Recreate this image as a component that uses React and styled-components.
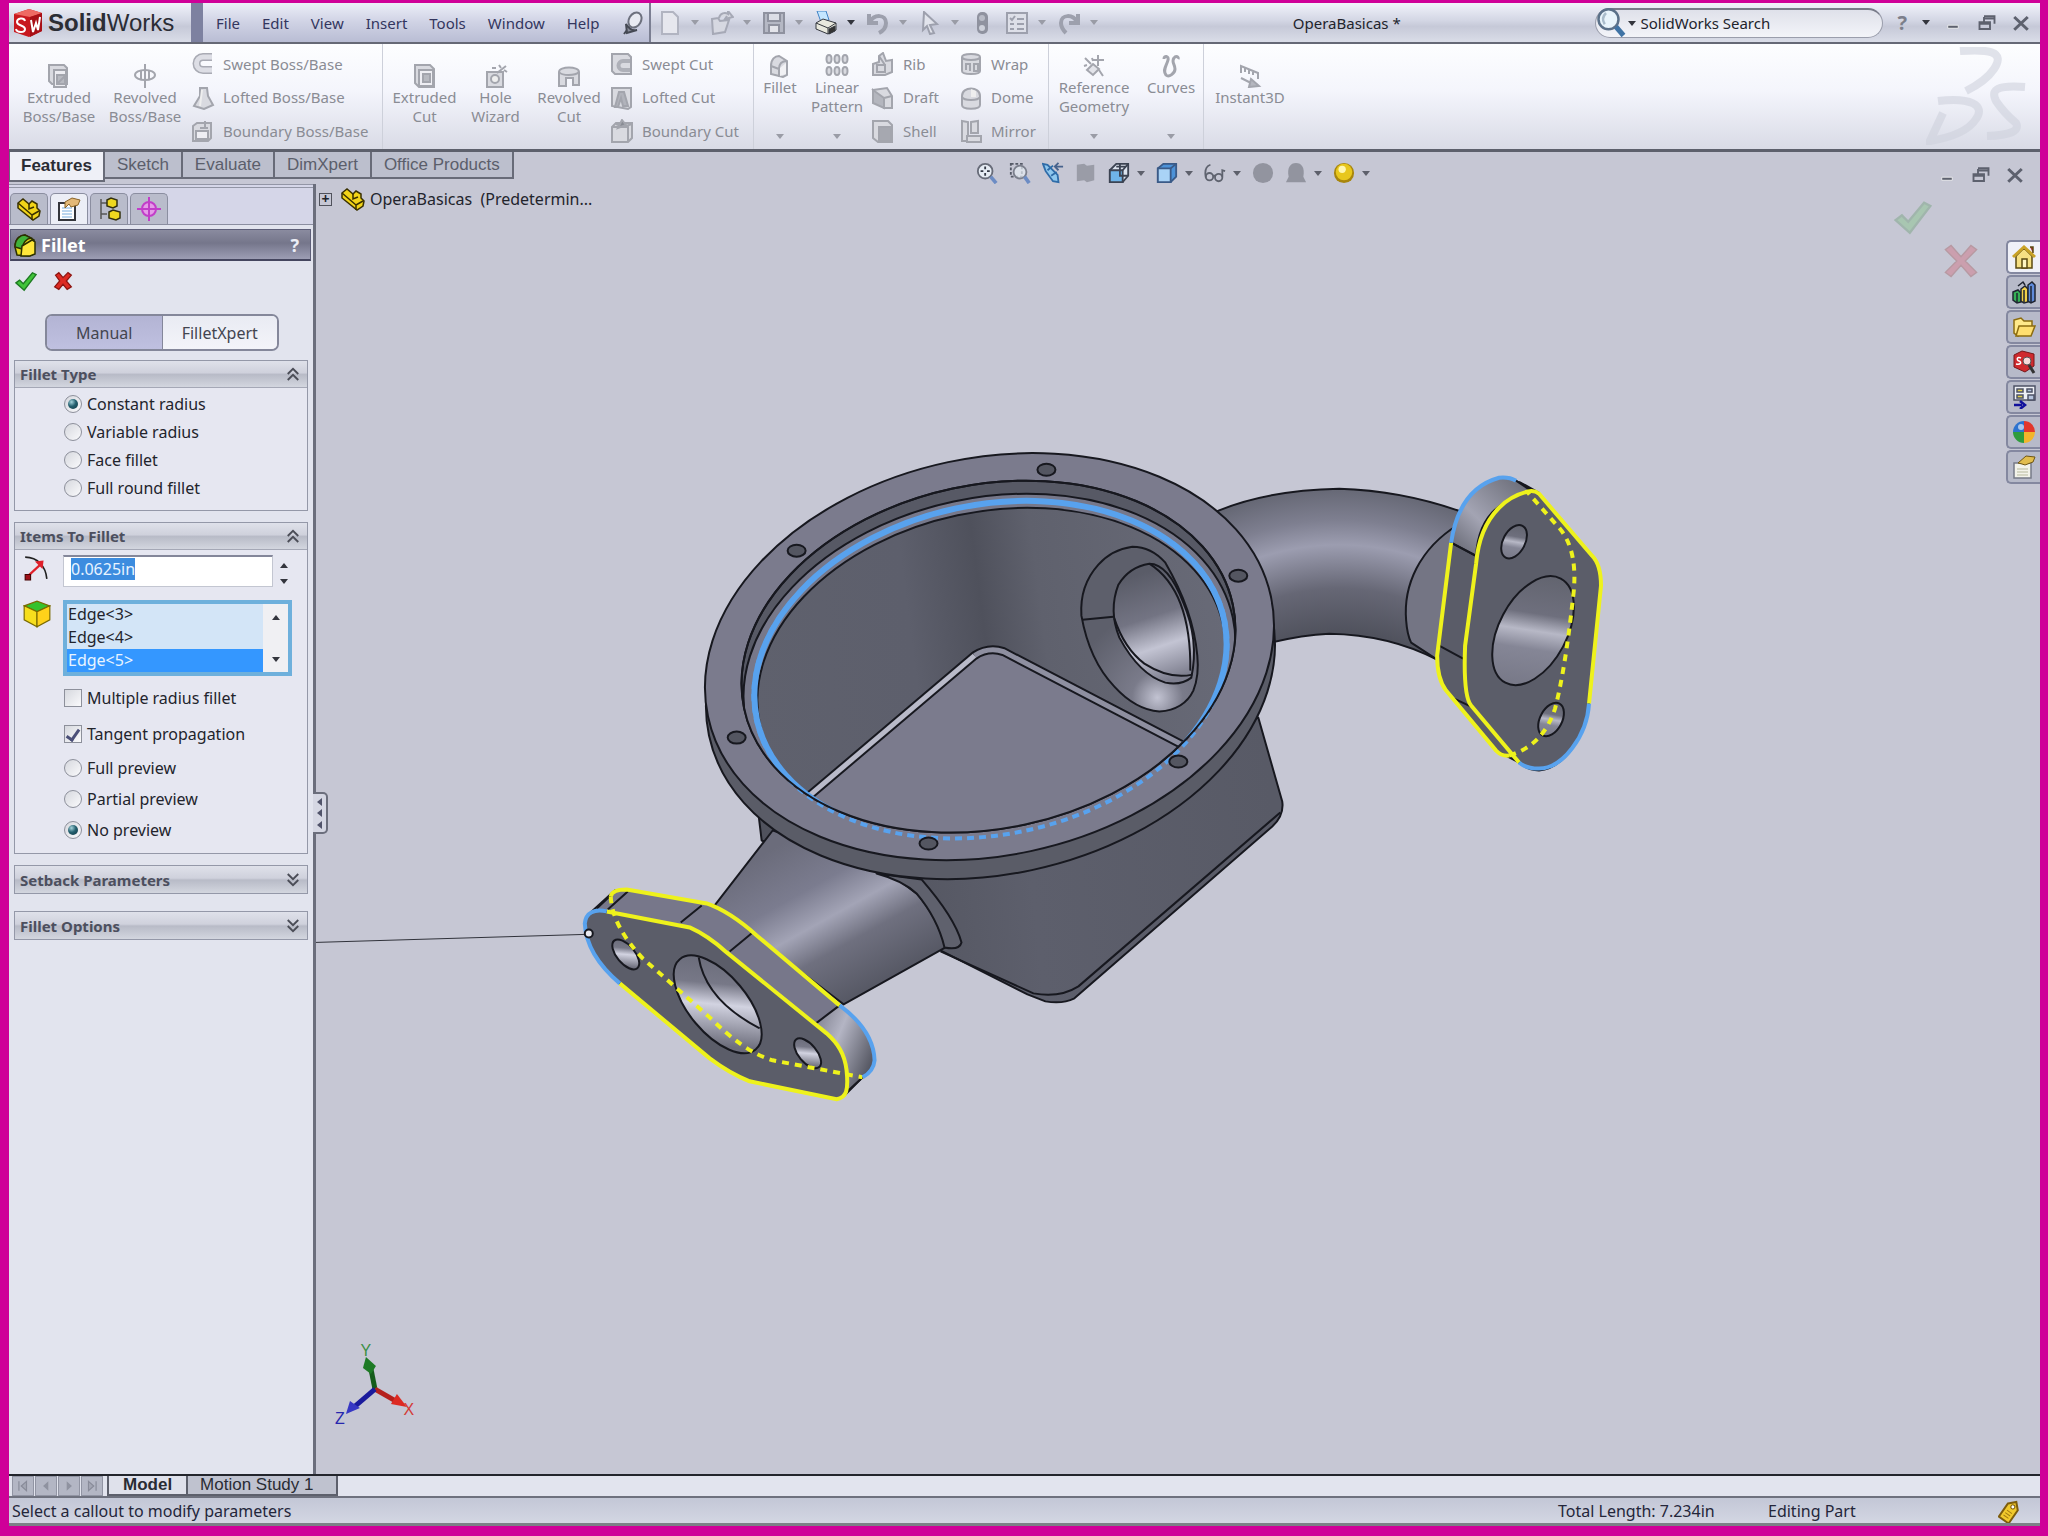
import styled, { createGlobalStyle } from "styled-components";
import { useEffect, useRef } from "react";

const uiFont = `"Noto Sans", "Open Sans", sans-serif`;
const tabFont = `"Liberation Sans", Arial, sans-serif`;

/* ---------- icons, all on a 24 x 24 grid ---------- */

const gray = { fill: "#d9dae0", stroke: "#a3a5ad", strokeWidth: 2 };
const line = { fill: "none", stroke: "#a3a5ad", strokeWidth: 2 };

const icons = {
    extrude: <g {...gray}><path d="M2 1h15l3 3v16H5l-3-3z" /><path d="M7 6h12v17H7z" fill="#ececf1" /><path d="M10 11h8v9h-8z" fill="#b7b9c0" /><path d="M10 20l9-9" /></g>,
    revolve: <g {...line}><path d="M12 0v24" /><ellipse cx="12" cy="11" rx="10" ry="5" /><path d="M8 7v9M16 7v9" /></g>,
    sweep: <g fill="none"><path d="M21 5h-9a6 6 0 0 0 0 13h9" stroke="#a9abb4" strokeWidth="8" /><path d="M21 5h-9a6 6 0 0 0 0 13h9" stroke="#dddee5" strokeWidth="5" /></g>,
    loft: <g {...gray}><path d="M9 2h7l1 8 5 9-9 4-10-3 6-10z" /><path d="M11 4l-2 16" stroke="#eee" /></g>,
    boundary: <g {...gray}><path d="M2 7l4-3h14v15l-3 3H2z" /><path d="M5 12h12v8H5z" fill="#eeeef3" /><path d="M14 2v8M9 9h8" /></g>,
    cut: <g {...gray}><path d="M2 1h15l4 4v18H6l-4-4z" /><path d="M6 6h14v16H6z" fill="#eeeef3" /><path d="M10 10h7v8h-7z" fill="#b7b9c0" /></g>,
    wizard: <g {...gray}><path d="M3 8h16v15H3z" /><circle cx="11" cy="15" r="4" fill="#eee" /><path d="M13 9l9-7M15 1l2 3M20 6l3 2M8 4h4" /></g>,
    revcut: <g {...gray}><path d="M2 8c0-6 20-6 20 0v13h-6v-7H9v8H2z" /><path d="M2 8c3 4 16 4 20 0" fill="none" /></g>,
    sweepcut: <g {...gray}><path d="M2 2h16l3 3v17H5l-3-3z" /><path d="M20 9h-7a4 4 0 0 0 0 9h7" fill="none" strokeWidth="4" stroke="#aeb0b8" /></g>,
    loftcut: <g {...gray}><path d="M2 2h19v19l-3 2-16-3z" /><path d="M9 6h5l4 14h-5l-2-8-3 9H5z" fill="#b1b3bb" /></g>,
    boundcut: <g {...gray}><path d="M2 8l4-4h16v15l-4 4H2z" /><path d="M2 8h16v15M6 5l7 3 9-3" /><path d="M12 1l4 5-8 3z" fill="#888b93" /></g>,
    fillet: <g {...gray}><path d="M3 12c0-7 4-10 8-10l8 5v14l-4 2-12-3z" /><path d="M3 12l8 3v8M11 15c0-5 3-8 8-8" fill="none" /><path d="M12 14l6-5v11l-6 2z" fill="#f1f1f4" stroke="none" /></g>,
    pattern: <g {...gray}>{[4, 12, 20].map((x) => [5, 17].map((y) => <ellipse key={x + y * 30} cx={x} cy={y} rx="2.5" ry="4" />))}</g>,
    rib: <g {...gray}><path d="M2 12l6-2V4l4-3 3 8 6-1v12l-7 3H2z" /><path d="M6 13h8v7H6zM8 4l6 9" /></g>,
    draft: <g {...gray}><path d="M2 4l14-2 5 8v12h-8z" /><path d="M2 4l11 8v10L2 17zM13 12l8-2" fill="#b4b6be" /></g>,
    shell: <g {...gray}><path d="M2 2h15l4 4v17H7l-5-4z" /><path d="M8 8h12v14H8z" fill="#a6a8b0" /></g>,
    wrap: <g {...gray}><path d="M3 5v14c0 4 18 4 18 0V5" /><ellipse cx="12" cy="5" rx="9" ry="3" /><path d="M7 18v-6h4v7M15 12h4v7h-4z" /></g>,
    dome: <g {...gray}><path d="M3 10C3 0 21 0 21 10v9c0 5-18 5-18 0z" /><path d="M3 11c2 4 16 4 18 0" fill="none" /><path d="M12 3l5 2v6h-5z" fill="#eee" stroke="none" /></g>,
    mirror: <g {...gray}><path d="M3 2l6 1v19H3zM12 3l7-1v12h-7z" /><path d="M8 17h14v6H8z" /></g>,
    refgeo: <g {...line}><path d="M3 4l6 6M16 1v11M11 6h11M17 16l4 6" /><path d="M11 10l6 5-6 6-6-5z" fill="#e3e4ea" /><path d="M2 12l3-1M10 4l1 3" /></g>,
    curves: <path d="M5 5c0-4 5-3 4 1-1 5-6 10-2 15 3 3 9-2 9-6 0-5-4-7-1-11 2-3 5-1 4 1" fill="none" stroke="#a3a5ad" strokeWidth="3" />,
    instant: <g {...line}><path d="M3 9V2l17 7v6M7 4v4M11 6v4M15 8v3M3 14l12 6" /><path d="M13 15l8 7-10 1z" fill="#b5b7bf" /></g>,

    newdoc: <path d="M4 1h11l5 5v17H4z" fill="#e6e7ee" stroke="#b1b4c1" strokeWidth="2" />,
    open: <path d="M2 8l6-1 2 3 9-1-4 12-12 2zM9 7c1-5 6-6 9-4V0l5 6-8 2 2-3" fill="#d6d8e1" stroke="#a6a9b6" strokeWidth="2" />,
    save: <g fill="#b5b8c4" stroke="#8f929f" strokeWidth="2"><path d="M2 2h20v20H2z" /><path d="M6 2h12v8H6z" fill="#dcdee6" /><path d="M7 14h10v8H7z" fill="#e3e4ea" /></g>,
    print: <g stroke="#35383f" strokeWidth="1"><path d="M3 0h9l3 9-8 2z" fill="#c4e6ff" stroke="#3f81c4" /><path d="M2 12l7-4 13 4v7l-8 4-12-5z" fill="#e8e8dd" /><path d="M2 12l12 5 8-5M14 17v6" fill="none" /><path d="M15 18l6-3v5l-6 3z" fill="#333" /></g>,
    undo: <path d="M3 3v9h9M4 11c4-8 16-8 16 1 0 5-3 8-7 10" fill="none" stroke="#9da0ad" strokeWidth="4" />,
    redo: <path d="M21 3v9h-9M20 11C16 3 4 3 4 12c0 5 3 8 5 10" fill="none" stroke="#9da0ad" strokeWidth="4" />,
    cursor: <path d="M6 1l13 12-7 1 4 8-4 1-3-8-4 4z" fill="#e2e4ec" stroke="#9da0ad" strokeWidth="2" />,
    rebuild: <g><rect x="7" y="1" width="11" height="22" rx="5" fill="#8f929f" /><circle cx="12" cy="7" r="3" fill="#b8bbc6" /><circle cx="12" cy="17" r="3" fill="#cdd0da" /></g>,
    options: <g stroke="#9da0ad" strokeWidth="2" fill="#dddfe8"><path d="M2 2h20v20H2z" /><path d="M5 7l2 2 3-4M12 8h7M5 13h4M12 13h7M5 18h4M12 18h7" fill="none" /></g>,
    pin: <g stroke="#454954" strokeWidth="2" fill="#e8eaf2"><path d="M3 23l6-8" /><path d="M5 13c3 5 7 7 11 6l-10 3z" fill="#8a8e9c" /><ellipse cx="14" cy="9" rx="6" ry="8" transform="rotate(30 14 9)" stroke="#6d717e" /></g>,
    search: <g fill="none"><ellipse cx="10" cy="9" rx="8" ry="8" stroke="#5b7189" strokeWidth="2" fill="#e8f4fb" /><path d="M16 15l6 7" stroke="#3f73a5" strokeWidth="4" /><path d="M8 4c-3 3-3 6-1 9" stroke="#a9bccb" strokeWidth="2" /></g>,

    zoomfit: <g fill="none"><circle cx="10" cy="10" r="8" fill="#e6ecf4" stroke="#676b78" strokeWidth="2" /><path d="M10 5v3M10 12v3M5 10h3M12 10h3" stroke="#333845" strokeWidth="2" /><path d="M16 16l6 7" stroke="#6c8cc4" strokeWidth="4" /></g>,
    zoomarea: <g fill="none"><path d="M2 2h12v14H2z" stroke="#555a67" strokeDasharray="3 2" strokeWidth="2" /><circle cx="12" cy="11" r="7" fill="#e6ecf4" fillOpacity=".7" stroke="#7b7f8c" strokeWidth="2" /><path d="M17 16l5 7" stroke="#6c8cc4" strokeWidth="4" /></g>,
    prevview: <g><path d="M1 2l5 1 11 11 1 8-6-1L4 10z" fill="#8fc8ee" stroke="#2f6ca8" strokeWidth="2" /><path d="M6 9l6-5M10 15l6-4" stroke="#2f6ca8" strokeWidth="2" /><path d="M14 5h9M18 1l-4 4 4 4" stroke="#47628c" strokeWidth="2" fill="none" /></g>,
    section: <path d="M2 3l8-1 3 2 8-1v17l-8 2-3-2-8 1z" fill="#9a9ca7" />,
    orient: <g stroke="#3c4352" strokeWidth="2" fill="#dce3ee"><path d="M2 9l7-7h13v13l-6 7H2z" /><path d="M2 9h14v13H2z" fill="#6fb4e8" /><path d="M16 9l6-7M13 2v13h9M9 5h11" fill="none" /></g>,
    display: <g stroke="#3a5a87" strokeWidth="2"><path d="M2 7l6-5h14v14l-6 6H2z" fill="#4c92d8" /><path d="M2 7h14v15H2z" fill="#a9d3f6" /><path d="M16 7l6-5" /></g>,
    glasses: <g fill="none" stroke="#5f636f" strokeWidth="2"><path d="M7 3C1 5 1 12 2 17" /><ellipse cx="6" cy="16" rx="4" ry="4" /><ellipse cx="16" cy="17" rx="4" ry="4" /><path d="M10 15h3M20 16V9l3 1" /></g>,
    sphere: <circle cx="12" cy="12" r="11" fill="#92949f" />,
    scene: <path d="M1 22l3-6C2 6 6 1 12 1s10 5 8 15l3 6z" fill="#92949f" />,
    gold: <g><circle cx="12" cy="12" r="11" fill="#a8860c" /><circle cx="12" cy="11" r="9" fill="#e8c71d" /><circle cx="10" cy="8" r="4" fill="#fff7b0" /></g>,

    part: <g stroke="#3a3100" strokeWidth="1.5"><path d="M1 6l5-4 6 5 3-3 5 3v4l3 3-1 5-6 4L1 11z" fill="#f2d418" /><path d="M1 6l14 12v5M15 18l7-4M12 7v5l5-2" fill="none" /></g>,
    props: <g><path d="M2 6h16v17H2z" fill="#fff" stroke="#34353b" strokeWidth="2" /><path d="M5 11h10M5 14h10M5 17h10M5 20h10" stroke="#79aede" /><path d="M8 5l7-4 8 2-2 5-7 2-2-3-4 4z" fill="#e3b877" stroke="#8a6427" /></g>,
    config: <g stroke="#33300f" strokeWidth="1.5"><path d="M4 2v20M4 6h6M4 17h6" stroke="#555" fill="none" /><path d="M10 3l4-2 6 2v6l-4 2-6-2zM12 15l4-2 7 2v6l-4 2-7-2z" fill="#efd81f" /></g>,
    dimx: <g stroke="#c23ec9" strokeWidth="2" fill="none"><circle cx="12" cy="12" r="7" fill="#e59be8" /><path d="M12 0v24M0 12h24" /></g>,
    filletColor: <g stroke="#2b3000" strokeWidth="1.5"><path d="M2 14C2 5 8 2 12 2l9 5v14l-5 2-12-1z" fill="#e5d91c" /><path d="M2 14C2 5 8 2 12 2l6 3c-6 1-8 5-9 11z" fill="#3fb23a" /><path d="M9 13l10-6 3 2v12l-5 2H8z" fill="#ffe73b" /></g>,
    ok: <path d="M1 14l4-3 4 4L19 3l4 2L10 22z" fill="#41c43a" stroke="#1d7a22" strokeWidth="1.5" />,
    cancel: <path d="M3 5l4-3 5 6 6-6 4 3-6 7 6 7-5 3-5-6-5 6-5-3 6-7z" fill="#dd2a22" stroke="#8d1410" strokeWidth="1.5" />,
    ghostCancel: <path d="M1 4l4-3 7 8 7-8 4 3-8 8 8 8-4 3-7-8-7 8-4-3 8-8z" fill="#dd2a42" stroke="#8d1410" strokeWidth="1" />,
    radius: <g fill="none"><path d="M2 2c12 0 19 9 20 20" stroke="#222" strokeWidth="1.5" /><path d="M4 20L17 8" stroke="#e0202a" strokeWidth="2" /><path d="M19 5l-1 8-7-7z" fill="#e0202a" /><path d="M2 18h5v5H2z" fill="#a01018" stroke="#400" /></g>,
    cube: <g stroke="#7a6a00" strokeWidth="1"><path d="M1 5l11-4 11 4-11 5z" fill="#35c22c" /><path d="M1 5l11 5v13L1 17z" fill="#f6de1d" /><path d="M23 5l-11 5v13l11-6z" fill="#ffd21a" /></g>,
    up: <path d="M5 12l7-7 7 7M5 20l7-7 7 7" fill="none" stroke="#4b4d57" strokeWidth="2.5" />,
    down: <path d="M5 4l7 7 7-7M5 12l7 7 7-7" fill="none" stroke="#4b4d57" strokeWidth="2.5" />,

    home: <g stroke="#5b4a12" strokeWidth="1.5"><path d="M4 11l8-8 8 8v12H4z" fill="#f7e083" /><path d="M1 12L12 2l11 10" fill="none" strokeWidth="3" stroke="#c9a227" /><path d="M10 14h5v9h-5z" fill="#fff6c4" /><path d="M18 2h3v6" fill="#a33" /></g>,
    library: <g stroke="#1f2430" strokeWidth="1.5"><path d="M1 12l5-2 3 3v9l-4 1-4-3z" fill="#35b055" /><path d="M9 9l4-3 3 3v13l-4 1-3-2z" fill="#f0cf49" /><path d="M16 5l4-3 3 3v16l-4 2-3-2z" fill="#5f8ad8" /><path d="M5 13v10M12 10v12M19 6v16M6 6l5-4 2 3" fill="none" /></g>,
    folder: <g stroke="#8c6c10" strokeWidth="1.5"><path d="M2 5l7-2 3 3h8v5L6 21 2 18z" fill="#ffe98a" /><path d="M7 11h16l-4 10H4z" fill="#ffdf70" /></g>,
    swsearch: <g><path d="M2 5l8-4 12 3v12l-9 6L2 17z" fill="#cf2a2e" stroke="#77181a" /><path d="M9 8c-4-2-5 2-2 3s2 4-3 3" stroke="#fff" strokeWidth="1.5" fill="none" /><circle cx="15" cy="11" r="4" fill="#f6dada" stroke="#555" /><path d="M17 15l5 8" stroke="#333" strokeWidth="3" /></g>,
    palette: <g stroke="#4d5266" strokeWidth="1.5"><path d="M2 1h21v14H2z" fill="#eef0f6" /><path d="M5 4h6v3H5zM5 10h6v3H5z" fill="#e3d24a" /><path d="M15 4h5v3h-5zM16 10h6v5h-6z" fill="#b6c4dd" /><path d="M2 20h8M8 16l5 4-5 4" stroke="#10109c" strokeWidth="2.5" fill="none" /></g>,
    ball: <g><path d="M12 12V1a11 11 0 0 1 11 11z" fill="#e2372c" /><path d="M12 12h11a11 11 0 0 1-11 11z" fill="#f2b52c" /><path d="M12 12v11A11 11 0 0 1 1 12z" fill="#2f9c3d" /><path d="M12 12H1A11 11 0 0 1 12 1z" fill="#2d73cf" /><circle cx="9" cy="7" r="3" fill="#fff" fillOpacity=".6" /></g>,
    custom: <g><path d="M2 8h17v15H2z" fill="#f3f3ea" stroke="#777b88" strokeWidth="1.5" /><path d="M5 14h11M5 17h11M5 20h11" stroke="#b7b99d" /><path d="M6 8l8-7 9 1-2 5-8 3-3-1z" fill="#e2bd4e" stroke="#6f5613" /></g>,
    tag: <g transform="rotate(35 12 12)"><path d="M6 7l6-6 6 6v16H6z" fill="#f1c92c" stroke="#7e5d0c" strokeWidth="2" /><circle cx="12" cy="7" r="2" fill="#fff" stroke="#7e5d0c" /><path d="M9 13h6M9 16h6M9 19h6" stroke="#a47c12" /></g>,
    min: <path d="M5 15h14v4H5z" fill="#5d616e" stroke="#fff" strokeWidth="1" />,
    restore: <path d="M8 3h14v10M8 4v6M8 6h14M2 11h14v9H2zM2 13h14" fill="none" stroke="#5d616e" strokeWidth="2.5" />,
    close: <path d="M3 4l18 17M21 4L3 21" fill="none" stroke="#5d616e" strokeWidth="4" />,
    first: <path d="M5 4v16M18 4l-9 8 9 8z" stroke="#888b99" strokeWidth="2" fill="#a3a6b3" />,
    prev: <path d="M16 4l-9 8 9 8z" fill="#8f92a0" />,
    next: <path d="M8 4l9 8-9 8z" fill="#8f92a0" />,
    last: <path d="M19 4v16M6 4l9 8-9 8z" stroke="#888b99" strokeWidth="2" fill="#a3a6b3" />,
};

const Svg = styled.svg`
    width: ${(p) => p.$size || 24}px;
    height: ${(p) => p.$size || 24}px;
    flex: none;
    display: block;
    opacity: ${(p) => p.$opacity || 1};
`;

const Icon = ({ name, size, opacity }) => (
    <Svg viewBox="0 0 24 24" $size={size} $opacity={opacity} aria-hidden="true">{icons[name]}</Svg>
);

/* ---------- data ---------- */

const menus = ["File", "Edit", "View", "Insert", "Tools", "Window", "Help"];

const quickTools = [
    { icon: "newdoc", label: "New", drop: true },
    { icon: "open", label: "Open", drop: true },
    { icon: "save", label: "Save", drop: true },
    { icon: "print", label: "Print", drop: true, active: true },
    { icon: "undo", label: "Undo", drop: true },
    { icon: "cursor", label: "Select", drop: true },
    { icon: "rebuild", label: "Rebuild" },
    { icon: "options", label: "Options", drop: true },
    { icon: "redo", label: "Redo", drop: true },
];

const viewTools = [
    { icon: "zoomfit", label: "Zoom to fit" },
    { icon: "zoomarea", label: "Zoom to area" },
    { icon: "prevview", label: "Previous view" },
    { icon: "section", label: "Section view" },
    { icon: "orient", label: "View orientation", drop: true },
    { icon: "display", label: "Display style", drop: true },
    { icon: "glasses", label: "Hide or show items", drop: true },
    { icon: "sphere", label: "Edit appearance" },
    { icon: "scene", label: "Apply scene", drop: true },
    { icon: "gold", label: "View settings", drop: true },
];

const taskTabs = ["home", "library", "folder", "swsearch", "palette", "ball", "custom"];
const tabs = ["Features", "Sketch", "Evaluate", "DimXpert", "Office Products"];

/* ---------- pieces ---------- */

const Tool = ({ icon, label, drop, active, size }) => (
    <ToolButton aria-label={label}>
        <Icon name={icon} size={size} />
        {drop && <Caret $dark={active} />}
    </ToolButton>
);

const Big = ({ icon, lines, width, drop, top }) => (
    <BigButton $width={width} $top={top}>
        <Icon name={icon} />
        <BigLabel>{lines.map((l) => <span key={l}>{l}</span>)}</BigLabel>
        {drop && <Caret />}
    </BigButton>
);

const Column = ({ items, width }) => (
    <SmallColumn $width={width}>
        {items.map(([icon, text]) => (
            <SmallButton key={text}><Icon name={icon} />{text}</SmallButton>
        ))}
    </SmallColumn>
);

const WindowButtons = () => (
    <WinButtons>
        <ToolButton aria-label="Minimize"><Icon name="min" size={18} /></ToolButton>
        <ToolButton aria-label="Restore"><Icon name="restore" size={18} /></ToolButton>
        <ToolButton aria-label="Close"><Icon name="close" size={18} /></ToolButton>
    </WinButtons>
);

const Group = ({ title, children }) => (
    <GroupBox $open={!!children}>
        <GroupHeader aria-expanded={!!children} $open={!!children}>
            {title}
            <Icon name={children ? "up" : "down"} size={18} />
        </GroupHeader>
        {children}
    </GroupBox>
);

const Choice = ({ type = "radio", name, label, checked, height }) => (
    <ChoiceRow $height={height}>
        <ChoiceInput type={type} name={name} defaultChecked={checked} />
        {label}
    </ChoiceRow>
);

const holes = [[1047, 469], [797, 550], [737, 737], [929, 843], [1179, 761], [1239, 575]];

const leftFront = "M607 911C595 908 586 912 585 923C586 945 600 966 620 983L710 1058Q730 1073 750 1081L837 1099C847 1097 849 1090 847 1070C845 1053 838 1043 827 1033L727 952Q708 935 690 927Z";
const rightFront = "M1528 491Q1535 489 1540 493L1593 555Q1602 564 1602 585L1590 703C1588 735 1564 768 1540 770Q1527 769 1520 762L1472 705Q1464 695 1466 645L1477 563Q1480 527 1500 507Q1512 495 1528 491Z";

const Model = () => (
    <Scene viewBox="316 183 1724 1291" preserveAspectRatio="xMinYMin meet" role="img" aria-label="Pump housing part">
        <defs>
            <linearGradient id="pipeL" gradientUnits="userSpaceOnUse" x1="770" y1="850" x2="855" y2="1003">
                <stop offset="0" stopColor="#6b6c7b" /><stop offset=".3" stopColor="#7b7c8f" /><stop offset=".5" stopColor="#a3a4b6" />
                <stop offset=".68" stopColor="#6f707f" /><stop offset="1" stopColor="#545662" />
            </linearGradient>
            <radialGradient id="pipeR" gradientUnits="userSpaceOnUse" cx="1340" cy="800" r="312">
                <stop offset=".54" stopColor="#50525d" /><stop offset=".68" stopColor="#666775" /><stop offset=".82" stopColor="#9c9db0" />
                <stop offset=".9" stopColor="#7e7f90" /><stop offset="1" stopColor="#666875" />
            </radialGradient>
            <linearGradient id="wall" gradientUnits="userSpaceOnUse" x1="750" y1="600" x2="1240" y2="640">
                <stop offset="0" stopColor="#5f616d" /><stop offset=".35" stopColor="#5d5f6c" /><stop offset=".5" stopColor="#4f515c" />
                <stop offset=".62" stopColor="#5f616d" /><stop offset="1" stopColor="#686a77" />
            </linearGradient>
            <linearGradient id="body" gradientUnits="userSpaceOnUse" x1="900" y1="900" x2="1280" y2="860">
                <stop offset="0" stopColor="#545661" /><stop offset=".35" stopColor="#5d5f6c" /><stop offset="1" stopColor="#585a66" />
            </linearGradient>
            <linearGradient id="bore" x1="0" y1="0" x2="1" y2="0.5">
                <stop offset="0" stopColor="#646674" /><stop offset=".4" stopColor="#777887" /><stop offset=".6" stopColor="#d2d3e1" /><stop offset="1" stopColor="#6c6d7b" />
            </linearGradient>
            <linearGradient id="boreR" x1="1" y1="0.4" x2="0" y2="0.6">
                <stop offset="0" stopColor="#62646f" /><stop offset=".35" stopColor="#6e6f7d" /><stop offset=".5" stopColor="#b7b8c6" /><stop offset=".66" stopColor="#858696" /><stop offset="1" stopColor="#777887" />
            </linearGradient>
            <radialGradient id="port" gradientUnits="userSpaceOnUse" cx="1158" cy="697" r="85">
                <stop offset="0" stopColor="#c2c3d2" /><stop offset=".3" stopColor="#7a7b8a" /><stop offset="1" stopColor="#5d5f6b" />
            </radialGradient>
            <linearGradient id="portIn" gradientUnits="userSpaceOnUse" x1="1135" y1="575" x2="1170" y2="680">
                <stop offset="0" stopColor="#5a5c68" /><stop offset=".4" stopColor="#737483" /><stop offset=".68" stopColor="#c3c4d3" /><stop offset="1" stopColor="#7c7d8d" />
            </linearGradient>
            <linearGradient id="lug" x1="0" y1="0" x2="1" y2="0.6">
                <stop offset="0" stopColor="#777887" /><stop offset=".45" stopColor="#b4b5c4" /><stop offset="1" stopColor="#555762" />
            </linearGradient>
            <linearGradient id="lugR" x1="0" y1="1" x2="1" y2="0">
                <stop offset="0" stopColor="#5f616c" /><stop offset=".4" stopColor="#a3a4b3" /><stop offset="1" stopColor="#62646f" />
            </linearGradient>
            <clipPath id="opening"><ellipse cx="989" cy="656" rx="250" ry="172" transform="rotate(-12 989 656)" /></clipPath>
        </defs>

        <g stroke="#17181f" strokeWidth="2" strokeLinejoin="round">
            <path d="M1190 525Q1245 490 1340 488Q1405 490 1465 512L1438 659Q1390 634 1330 633Q1300 634 1260 645Z" fill="url(#pipeR)" />
            <path d="M1459 524C1420 548 1404 585 1407 620Q1408 634 1412 642L1438 659L1462 620Z" fill="#747584" />

            <path d="M759 800V815L762 840L790 850V800Z" fill="#50525d" />
            <path d="M860 860L1259 717L1283 801Q1285 815 1273 826L1075 998Q1063 1004 1046 1001L1028 994L925 942Z" fill="url(#body)" />
            <path d="M941 951L1034 993Q1060 998 1079 986L1281 812" fill="none" />
            <path d="M773 830L715 905L760 940L844 1004L946 947Q937 915 917 893L870 858Z" fill="url(#pipeL)" />
            <path d="M877 873Q903 880 917 893Q938 918 945 947Q960 950 962 942Q955 917 922 879Z" fill="#5f616d" />

            <ellipse cx="991" cy="675" rx="288" ry="199" transform="rotate(-12 991 675)" fill="#5a5c67" />
            <ellipse cx="990" cy="656" rx="288" ry="199" transform="rotate(-12 990 656)" fill="#7b7b8d" />
            <ellipse cx="989" cy="656" rx="250" ry="172" transform="rotate(-12 989 656)" fill="#575965" />
        </g>

        <g clipPath="url(#opening)" stroke="#17181f" strokeWidth="2">
            <ellipse cx="990" cy="669" rx="249" ry="172" transform="rotate(-12 990 669)" fill="#77788a" />
            <ellipse cx="992" cy="674" rx="237" ry="163" transform="rotate(-12 992 674)" fill="url(#wall)" />
            <path d="M800 800L975 654Q989 644 1004 650L1190 748L1180 850H850Z" fill="#7b7b8d" stroke="none" />
            <path d="M804 800L975 655Q989 646 1004 651L1190 748" fill="none" strokeWidth="9" />
            <path d="M975 655Q989 646 1004 651L1190 748" fill="none" stroke="#8e8fa0" strokeWidth="5" />
            <path d="M804 800L975 655" fill="none" stroke="#b9bac9" strokeWidth="5" />
            <path d="M1133 546Q1112 549 1099 564Q1080 585 1082 615Q1090 660 1115 686Q1136 709 1160 711Q1185 709 1194 690Q1200 675 1198 655Q1194 610 1166 562Q1152 546 1133 546Z" fill="url(#port)" />
            <path d="M1150 563Q1130 566 1119 584Q1109 610 1120 637Q1140 674 1166 682Q1182 685 1192 677Q1200 640 1184 602Q1169 563 1150 563Z" fill="url(#portIn)" />
            <path d="M1115 618Q1125 648 1145 663Q1170 679 1193 674M1083 619L1114 616M1150 563Q1192 590 1191 670" fill="none" />
        </g>
        <g fill="none" stroke="#58a2ee">
            <ellipse cx="991" cy="669" rx="240" ry="165" transform="rotate(-12 991 669)" strokeWidth="4" strokeDasharray="7 5" />
            <g clipPath="url(#opening)">
                <ellipse cx="991" cy="669" rx="239" ry="165" transform="rotate(-12 991 669)" strokeWidth="6" />
            </g>
        </g>
        <ellipse cx="989" cy="656" rx="250" ry="172" transform="rotate(-12 989 656)" fill="none" stroke="#17181f" strokeWidth="2" />
        <g fill="#545661" stroke="#17181f" strokeWidth="2">
            {holes.map(([x, y]) => <ellipse key={x} cx={x} cy={y} rx="9" ry="6" />)}
        </g>

        {/* left flange */}
        <g stroke="#17181f" strokeWidth="2">
            <path d="M593 910L615 890L627 889L707 903Q730 911 757 935L840 1005Q874 1030 875 1060Q874 1071 863 1077L845 1095L700 960Z" fill="#77778a" />
            <path d="M815 1024L840 1005Q874 1030 875 1060Q874 1071 863 1077L848 1091Q850 1050 815 1024Z" fill="url(#lug)" />
            <path d={leftFront} fill="#5b5d69" />
            <path d="M597 908L615 891M608 909L628 891M681 922L702 905M730 951L753 932" fill="none" />
            <ellipse cx="718" cy="1004" rx="59" ry="29" transform="rotate(50 718 1004)" fill="url(#bore)" />
            <path d="M699 957Q706 1000 760 1028" fill="none" />
            <ellipse cx="626" cy="954" rx="18" ry="9" transform="rotate(50 626 954)" fill="url(#bore)" />
            <ellipse cx="808" cy="1053" rx="18" ry="9" transform="rotate(50 808 1053)" fill="url(#bore)" />
        </g>
        <g fill="none" strokeWidth="4" stroke="#eef21c">
            <path d="M620 983L710 1058Q730 1073 750 1081L837 1099C847 1097 849 1090 847 1070C845 1053 838 1043 827 1033L727 952Q708 935 690 927L607 911" />
            <path d="M611 896Q612 889 627 889L707 903Q730 911 757 935L840 1005" />
            <path d="M611 896Q612 925 643 958L710 1017Q745 1052 773 1060L863 1077" strokeDasharray="7 6" />
            <path d="M607 911C595 908 586 912 585 923C586 945 600 966 620 983M840 1005Q874 1030 875 1060Q874 1071 863 1077" stroke="#58a2ee" />
        </g>

        {/* right flange */}
        <g stroke="#17181f" strokeWidth="2">
            <path d="M1452 542L1438 655Q1438 678 1447 690L1497 750L1520 762L1560 600L1540 493L1515 479Z" fill="#5a5c68" />
            <path d="M1452 542Q1460 488 1500 477Q1510 476 1517 480L1535 492Q1480 500 1477 555Z" fill="url(#lugR)" />
            <path d={rightFront} fill="#5b5d69" />
            <path d="M1452 542L1476 555M1440 645L1464 658M1455 698L1472 706M1520 481L1540 492" fill="none" />
            <ellipse cx="1534" cy="630" rx="59" ry="34" transform="rotate(-62 1534 630)" fill="url(#boreR)" />
            <ellipse cx="1515" cy="541" rx="18" ry="11" transform="rotate(-62 1515 541)" fill="url(#boreR)" />
            <ellipse cx="1552" cy="719" rx="18" ry="11" transform="rotate(-62 1552 719)" fill="url(#boreR)" />
        </g>
        <g fill="none" strokeWidth="4" stroke="#eef21c">
            <path d="M1520 762L1472 705Q1464 695 1466 645L1477 563Q1480 527 1500 507Q1512 495 1528 491Q1535 489 1540 493L1593 555Q1602 564 1602 585L1590 703" />
            <path d="M1452 542L1438 655Q1438 678 1447 690L1497 750Q1503 756 1510 755" />
            <path d="M1510 755Q1544 745 1556 708Q1566 670 1574 597Q1580 550 1560 527L1528 491" strokeDasharray="7 6" />
            <path d="M1452 542Q1460 488 1500 477Q1510 476 1517 480M1590 703C1588 735 1564 768 1540 768Q1527 768 1520 762" stroke="#58a2ee" />
        </g>

        <path d="M316 942L585 934" stroke="#30323a" strokeWidth="1" />
        <circle cx="589" cy="933" r="4" fill="#e9e9ef" stroke="#17181f" strokeWidth="2" />

        {/* triad */}
        <g strokeWidth="5">
            <path d="M375 1389L370 1364" stroke="#155c1b" /><path d="M366 1357L376 1366L371 1374L363 1368Z" fill="#1d7a25" />
            <path d="M375 1389L396 1401" stroke="#b5201c" /><path d="M407 1407L397 1394L391 1404Z" fill="#dd2a22" />
            <path d="M375 1389L354 1407" stroke="#1a1a9c" /><path d="M346 1414L350 1401L360 1408Z" fill="#3737c4" />
        </g>
        <g fontFamily="Liberation Sans, sans-serif" fontSize="16" textAnchor="middle">
            <text x="366" y="1356" fill="#3c8f45">Y</text>
            <text x="409" y="1415" fill="#d43a36">X</text>
            <text x="340" y="1424" fill="#2626ae">Z</text>
        </g>
    </Scene>
);

const App = () => {
    const radiusField = useRef(null);

    useEffect(() => {
        radiusField.current.focus();
        radiusField.current.select();
    }, []);

    return (
        <Frame>
            <GlobalStyle />
            <TitleBar>
                <Brand>
                    <Svg viewBox="0 0 30 30" $size={30} aria-hidden="true">
                        <path d="M1 6L16 1l13 4v18L16 29 1 24z" fill="#c8191f" />
                        <path d="M1 6L16 1l13 4-12 4z" fill="#ee6a63" />
                        <path d="M17 9l12-4v18l-12 6z" fill="#a80f16" />
                        <path d="M12 13c-1-4-8-3-8 1 0 4 8 3 8 7 0 4-8 4-9 0M18 12l2 12 3-9 2 7 2-13" fill="none" stroke="#fff" strokeWidth="2" />
                    </Svg>
                    <span><b>Solid</b>Works</span>
                </Brand>
                <MenuBar>
                    {menus.map((m) => <MenuButton key={m}>{m}</MenuButton>)}
                    <Icon name="pin" />
                </MenuBar>
                <QuickBar>
                    {quickTools.map((t) => <Tool key={t.icon} {...t} />)}
                </QuickBar>
                <DocTitle>OperaBasicas *</DocTitle>
                <SearchBox>
                    <Icon name="search" size={30} />
                    <Caret $dark />
                    <SearchInput aria-label="Search" defaultValue="SolidWorks Search" />
                </SearchBox>
                <HelpButton aria-label="Help">?<Caret $dark /></HelpButton>
                <WindowButtons />
            </TitleBar>

            <Ribbon>
                <RibbonGroup>
                    <Big icon="extrude" lines={["Extruded", "Boss/Base"]} width={86} />
                    <Big icon="revolve" lines={["Revolved", "Boss/Base"]} width={86} />
                    <Column width={194} items={[["sweep", "Swept Boss/Base"], ["loft", "Lofted Boss/Base"], ["boundary", "Boundary Boss/Base"]]} />
                </RibbonGroup>
                <RibbonGroup>
                    <Big icon="cut" lines={["Extruded", "Cut"]} width={71} />
                    <Big icon="wizard" lines={["Hole", "Wizard"]} width={71} />
                    <Big icon="revcut" lines={["Revolved", "Cut"]} width={76} />
                    <Column width={146} items={[["sweepcut", "Swept Cut"], ["loftcut", "Lofted Cut"], ["boundcut", "Boundary Cut"]]} />
                </RibbonGroup>
                <RibbonGroup $tight>
                    <Big icon="fillet" lines={["Fillet"]} width={52} drop top />
                    <Big icon="pattern" lines={["Linear", "Pattern"]} width={62} drop top />
                    <Column width={88} items={[["rib", "Rib"], ["draft", "Draft"], ["shell", "Shell"]]} />
                    <Column width={92} items={[["wrap", "Wrap"], ["dome", "Dome"], ["mirror", "Mirror"]]} />
                </RibbonGroup>
                <RibbonGroup $tight>
                    <Big icon="refgeo" lines={["Reference", "Geometry"]} width={90} drop top />
                    <Big icon="curves" lines={["Curves"]} width={64} drop top />
                </RibbonGroup>
                <RibbonGroup>
                    <Big icon="instant" lines={["Instant3D"]} width={80} />
                </RibbonGroup>
                <Watermark viewBox="0 0 106 98" aria-hidden="true">
                    <g fill="none" stroke="#cfd2dd" strokeWidth="8">
                        <path d="M34 4C62 2 80 4 68 22Q60 34 40 44M12 54C44 50 60 58 50 72Q40 88 4 94L17 66" />
                        <path d="M99 40C72 38 64 42 70 54Q78 66 90 76Q96 88 61 89" />
                    </g>
                </Watermark>
            </Ribbon>

            <TabRow>
                <Tabs role="tablist">
                    {tabs.map((t, i) => <Tab key={t} role="tab" aria-selected={i === 0} $active={i === 0}>{t}</Tab>)}
                </Tabs>
                <ViewBar>
                    {viewTools.map((t) => <Tool key={t.icon} {...t} size={22} />)}
                </ViewBar>
                <WindowButtons />
            </TabRow>

            <Main>
                <Panel>
                    <PanelTabs>
                        {["part", "props", "config", "dimx"].map((n) => (
                            <PanelTab key={n} aria-label={n} $active={n === "props"}><Icon name={n} /></PanelTab>
                        ))}
                    </PanelTabs>
                    <PanelTitle>
                        <Icon name="filletColor" />
                        <span>Fillet</span>
                        <PanelHelp aria-label="Help">?</PanelHelp>
                    </PanelTitle>
                    <Confirm>
                        <ToolButton aria-label="OK"><Icon name="ok" size={22} /></ToolButton>
                        <ToolButton aria-label="Cancel"><Icon name="cancel" size={20} /></ToolButton>
                    </Confirm>
                    <Segmented>
                        <Segment $active>Manual</Segment>
                        <Segment>FilletXpert</Segment>
                    </Segmented>

                    <Group title="Fillet Type">
                        <Choices>
                            <Choice name="type" label="Constant radius" checked />
                            <Choice name="type" label="Variable radius" />
                            <Choice name="type" label="Face fillet" />
                            <Choice name="type" label="Full round fillet" />
                        </Choices>
                    </Group>

                    <Group title="Items To Fillet">
                        <FieldRow>
                            <Icon name="radius" size={26} />
                            <RadiusInput ref={radiusField} aria-label="Radius" defaultValue="0.0625in" />
                            <Spinner>
                                <SpinButton aria-label="Increase"><Caret $dark $up /></SpinButton>
                                <SpinButton aria-label="Decrease"><Caret $dark /></SpinButton>
                            </Spinner>
                        </FieldRow>
                        <FieldRow>
                            <Icon name="cube" size={28} />
                            <ListBox>
                                <EdgeList multiple size={3} aria-label="Edges" defaultValue={["Edge<5>"]}>
                                    <option>{"Edge<3>"}</option>
                                    <option>{"Edge<4>"}</option>
                                    <option>{"Edge<5>"}</option>
                                </EdgeList>
                                <ListScroll>
                                    <SpinButton aria-label="Scroll up"><Caret $dark $up /></SpinButton>
                                    <SpinButton aria-label="Scroll down"><Caret $dark /></SpinButton>
                                </ListScroll>
                            </ListBox>
                        </FieldRow>
                        <Choices>
                            <Choice type="checkbox" label="Multiple radius fillet" height={36} />
                            <Choice type="checkbox" label="Tangent propagation" height={36} checked />
                            <Choice name="preview" label="Full preview" height={31} />
                            <Choice name="preview" label="Partial preview" height={31} />
                            <Choice name="preview" label="No preview" height={31} checked />
                        </Choices>
                    </Group>

                    <Group title="Setback Parameters" />
                    <Group title="Fillet Options" />
                    <Handle aria-label="Collapse panel"><i /><i /><i /></Handle>
                </Panel>

                <Viewport>
                    <Model />
                    <Tree>
                        <Expander aria-label="Expand">+</Expander>
                        <Icon name="part" />
                        <span>OperaBasicas&nbsp; (Predetermin...</span>
                    </Tree>
                    <Corner>
                        <Icon name="ok" size={38} opacity={0.22} />
                        <CornerCancel><Icon name="ghostCancel" size={34} opacity={0.25} /></CornerCancel>
                    </Corner>
                    <TaskTabs>
                        {taskTabs.map((t, i) => <TaskTab key={t} aria-label={t} $active={i === 0}><Icon name={t} /></TaskTab>)}
                    </TaskTabs>
                </Viewport>
            </Main>

            <BottomTabs>
                <NavButtons>
                    {["first", "prev", "next", "last"].map((n) => (
                        <NavButton key={n} aria-label={n}><Icon name={n} size={14} /></NavButton>
                    ))}
                </NavButtons>
                <BottomTab $active>Model</BottomTab>
                <BottomTab>Motion Study 1</BottomTab>
            </BottomTabs>

            <StatusBar>
                <StatusText>Select a callout to modify parameters</StatusText>
                <StatusCell $width={210}>Total Length: 7.234in</StatusCell>
                <StatusCell $width={230}>Editing Part</StatusCell>
                <Icon name="tag" />
            </StatusBar>
        </Frame>
    );
}

/* ---------- styles ---------- */

const GlobalStyle = createGlobalStyle`
    * {
        box-sizing: border-box;
    }

    body {
        margin: 0;
        font-family: ${uiFont};
        font-size: 16px;
        color: #22242c;
    }

    button, input, select {
        font: inherit;
        color: inherit;
        margin: 0;
    }

    button {
        border: none;
        background: none;
        padding: 0;
    }
`;

const Frame = styled.div`
    min-height: 100vh;
    display: flex;
    flex-direction: column;
    background: #cf0098;
    padding: 3px 8px 10px 9px;
`;

const TitleBar = styled.header`
    display: flex;
    align-items: center;
    height: 41px;
    padding-right: 10px;
    font-size: 15px;
    background: linear-gradient(#f1f3fb, #d3d6e4 45%, #c6c9d8 60%, #dadde8);
    border-bottom: 2px solid #666976;
`;

const Brand = styled.div`
    display: flex;
    align-items: center;
    gap: 5px;
    width: 182px;
    padding-left: 4px;
    font-family: ${tabFont};
    font-size: 24px;
    color: #2b2d35;
`;

const MenuBar = styled.nav`
    display: flex;
    align-items: center;
    align-self: stretch;
    gap: 22px;
    width: 460px;
    padding-left: 13px;
    border-left: 12px solid #7d81a0;
    border-right: 2px solid #7b7f92;
    background: linear-gradient(#eceef8, #cfd2e4 50%, #b9bdd4);
`;

const MenuButton = styled.button`
    color: #33365e;
`;

const QuickBar = styled.div`
    display: flex;
    align-items: center;
    gap: 11px;
    padding-left: 7px;
`;

const ToolButton = styled.button`
    display: flex;
    align-items: center;
    gap: 9px;
`;

const Caret = styled.i`
    border: 4px solid transparent;
    border-top: ${(p) => (p.$up ? "0" : `5px solid ${p.$dark ? "#33353d" : "#9a9ca6"}`)};
    border-bottom: ${(p) => (p.$up ? "5px solid #33353d" : "0")};
    flex: none;
`;

const DocTitle = styled.div`
    flex: 1;
    text-align: center;
`;

const SearchBox = styled.label`
    display: flex;
    align-items: center;
    gap: 2px;
    width: 288px;
    height: 30px;
    border: 1px solid #9b9eac;
    border-top: 2px solid #777a88;
    border-radius: 15px;
    background: linear-gradient(#dfe1ea, #f3f4f9);
`;

const SearchInput = styled.input`
    flex: 1;
    min-width: 0;
    border: none;
    outline: none;
    background: none;
    padding: 0 0 0 2px;
    font-size: 15px;
`;

const HelpButton = styled.button`
    display: flex;
    align-items: center;
    gap: 15px;
    padding: 0 14px;
    font-size: 20px;
    font-weight: 700;
    color: #7c7f8b;
`;

const WinButtons = styled.div`
    display: flex;
    align-items: center;
    justify-self: end;
    gap: 16px;
`;

const Ribbon = styled.section`
    display: flex;
    height: 108px;
    padding: 0 8px 0 7px;
    font-size: 15px;
    line-height: 19px;
    color: #8a8c94;
    background: linear-gradient(#fdfeff, #f4f5fc 45%, #d9dbe6);
    border-bottom: 3px solid #5d606c;
`;

const RibbonGroup = styled.div`
    display: flex;
    align-items: stretch;
    padding-left: ${(p) => (p.$tight ? 0 : 6)}px;

    & + & {
        border-left: 1px solid #cdd0da;
    }

    &:first-child {
        padding-left: 0;
    }
`;

const BigButton = styled.button`
    display: flex;
    flex-direction: column;
    align-items: center;
    width: ${(p) => p.$width}px;
    padding: ${(p) => (p.$top ? "10px 0" : "20px 0 0")};
`;

const BigLabel = styled.span`
    display: flex;
    flex-direction: column;
    margin-bottom: auto;
    line-height: 19px;
`;

const SmallColumn = styled.div`
    display: flex;
    flex-direction: column;
    justify-content: space-between;
    width: ${(p) => p.$width}px;
    padding: 8px 0 6px 3px;
`;

const SmallButton = styled.button`
    display: flex;
    align-items: center;
    gap: 8px;
    white-space: nowrap;
`;

const Watermark = styled.svg`
    width: 106px;
    height: 98px;
    margin: 3px 0 0 auto;
    opacity: 0.6;
`;

const TabRow = styled.div`
    display: grid;
    grid-template-columns: 313px 1fr auto 1fr;
    align-items: end;
    height: 32px;
    padding-right: 16px;
    background: #c6c7d4;
`;

const Tabs = styled.div`
    grid-column: 1 / 3;
    align-self: start;
    display: flex;
    align-items: flex-start;
    font-family: ${tabFont};
    font-size: 17px;
`;

const Tab = styled.button`
    height: ${(p) => (p.$active ? 30 : 27)}px;
    padding: 0 ${(p) => (p.$active ? 11 : 12)}px;
    border: 2px solid #686b78;
    border-top: none;
    border-left-width: ${(p) => (p.$active ? 1 : 0)}px;
    color: ${(p) => (p.$active ? "#2a2c34" : "#5b5e6b")};
    background: ${(p) => (p.$active ? "#eff0f7" : "#bcbfcd")};
    font-weight: ${(p) => (p.$active ? 700 : 400)};
`;

const ViewBar = styled.div`
    display: flex;
    align-items: center;
    gap: 11px;

    ${ToolButton} {
        gap: 7px;
    }

    ${Caret} {
        border-top-color: #5d606b;
    }
`;

const Main = styled.main`
    display: flex;
    flex: 1;
`;

const Panel = styled.aside`
    position: relative;
    flex: none;
    width: 307px;
    padding: 0 5px;
    background: #e2e4ee;
    border-right: 3px solid #6b6e7c;
`;

const PanelTabs = styled.div`
    display: flex;
    align-items: flex-end;
    gap: 2px;
    height: 41px;
    margin: 0 -5px;
    padding-left: 1px;
    border-top: 4px double #9295a5;
    border-bottom: 1px solid #8b8ea0;
    background: #d5d6e8;
`;

const PanelTab = styled.button`
    display: grid;
    place-items: center;
    width: 38px;
    height: 31px;
    border: 1px solid #8b8ea0;
    border-bottom: none;
    border-radius: 5px 5px 0 0;
    background: ${(p) => (p.$active ? "#eceef6" : "#b9bccb")};
`;

const PanelTitle = styled.div`
    display: flex;
    align-items: center;
    gap: 4px;
    height: 32px;
    margin: 4px -3px 0 -4px;
    padding: 0 11px 0 2px;
    font-size: 18px;
    font-weight: 700;
    color: #fff;
    border: 1px solid #5d5e78;
    border-bottom: 2px solid #45465f;
    background: linear-gradient(#8a8b9f, #75768b 45%, #9d9eb4);
`;

const PanelHelp = styled.button`
    margin-left: auto;
    color: #eceef6;
    font-size: 18px;
`;

const Confirm = styled.div`
    display: flex;
    align-items: center;
    gap: 16px;
    height: 40px;
    padding-left: 1px;
`;

const Segmented = styled.div`
    display: flex;
    width: 234px;
    height: 37px;
    margin: 13px 0 9px 31px;
    border: 2px solid #84879a;
    border-radius: 7px;
    overflow: hidden;
`;

const Segment = styled.button`
    flex: 1;
    font-size: 16px;
    line-height: 20px;
    color: #43454f;
    background: ${(p) => (p.$active ? "linear-gradient(#b3b4d4, #bfc0e0)" : "linear-gradient(#e9ebf3, #f3f4f9)")};

    & + & {
        border-left: 1px solid #84879a;
    }
`;

const GroupBox = styled.section`
    margin-bottom: ${(p) => (p.$open ? 11 : 17)}px;
    border: 1px solid #9498a8;
    background: #e6e7f1;
`;

const GroupHeader = styled.button`
    display: flex;
    align-items: center;
    justify-content: space-between;
    width: 100%;
    height: 27px;
    padding: 0 5px;
    border-bottom: ${(p) => (p.$open ? 1 : 0)}px solid #a5a8b6;
    font-size: 15px;
    font-weight: 700;
    color: #4c4f5e;
    background: linear-gradient(#dfe1ea, #cfd1dc 45%, #b8bbc7 52%, #d3d6df);
`;

const Choices = styled.div`
    padding: 2px 0 8px 49px;
`;

const ChoiceRow = styled.label`
    display: flex;
    align-items: center;
    gap: 5px;
    height: ${(p) => p.$height || 28}px;
`;

const ChoiceInput = styled.input`
    appearance: none;
    display: grid;
    place-items: center;
    width: 18px;
    height: 18px;
    border: 1px solid #8d909b;
    border-radius: ${(p) => (p.type === "radio" ? "50%" : "0")};
    background: linear-gradient(135deg, #d6d8de, #fafafc);

    &[type="radio"]:checked::before {
        content: "";
        width: 10px;
        height: 10px;
        border-radius: 50%;
        background: radial-gradient(circle at 35% 30%, #a5d4dc, #24606f 45%, #123743);
    }

    &[type="checkbox"]:checked::before {
        content: "";
        width: 5px;
        height: 11px;
        border: solid #4b4f78;
        border-width: 0 3px 3px 0;
        transform: rotate(35deg);
    }
`;

const FieldRow = styled.div`
    display: grid;
    grid-template-columns: 40px auto 1fr;
    align-items: start;
    padding: 5px 0 8px 8px;

    & + & {
        padding: 5px 0 2px 8px;
    }
`;

const RadiusInput = styled.input`
    width: 210px;
    height: 32px;
    padding: 0 0 6px 7px;
    border: 1px solid #c3c6d1;
    border-top: 2px solid #84879a;
    outline: none;
    background: #fff;

    &::selection {
        background: #3c8cdf;
        color: #e8f4ff;
    }
`;

const Spinner = styled.div`
    display: flex;
    flex-direction: column;
    gap: 10px;
    padding: 7px 0 0 6px;
`;

const SpinButton = styled.button`
    display: grid;
    place-items: center;
    width: 10px;
    height: 6px;
`;

const ListBox = styled.div`
    display: flex;
    width: 229px;
    height: 76px;
    border: 4px solid #6eb0dc;
    background: #d3e5f7;
`;

const EdgeList = styled.select`
    flex: 1;
    border: none;
    border-radius: 0;
    outline: none;
    padding: 0;
    overflow: hidden;
    background: #d3e5f7;

    option {
        height: 23px;
        padding: 0 0 0 1px;
        line-height: 23px;
        min-height: 0;
    }

    option:checked {
        color: #e8f4ff;
        background: #3497ff linear-gradient(#3497ff, #3497ff);
    }
`;

const ListScroll = styled.div`
    display: flex;
    flex-direction: column;
    justify-content: space-between;
    align-items: center;
    width: 25px;
    padding: 10px 0;
    background: #f0f0f3;
`;

const Handle = styled.button`
    position: absolute;
    left: 304px;
    top: 608px;
    display: flex;
    flex-direction: column;
    justify-content: space-evenly;
    align-items: center;
    width: 15px;
    height: 42px;
    z-index: 1;
    border: 2px solid #6b6e7c;
    border-left: none;
    border-radius: 0 5px 5px 0;
    background: #d5d7e3;

    i {
        border: 4px solid transparent;
        border-left: none;
        border-right: 5px solid #50536a;
    }
`;

const Viewport = styled.div`
    position: relative;
    flex: 1;
    min-width: 0;
    overflow: hidden;
    background: #c6c7d4;
`;

const Scene = styled.svg`
    position: absolute;
    inset: 0;
    width: 100%;
    height: 100%;
`;

const Tree = styled.div`
    position: absolute;
    left: 3px;
    top: 3px;
    display: flex;
    align-items: center;
    gap: 5px;
    font-size: 16px;

    ${Svg} {
        margin-left: 4px;
    }
`;

const Expander = styled.button`
    width: 13px;
    height: 13px;
    border: 1px solid #50525c;
    font-size: 14px;
    font-weight: 700;
    line-height: 10px;
`;

const Corner = styled.div`
    position: absolute;
    right: 62px;
    top: 14px;
    display: flex;
    gap: 12px;
`;

const CornerCancel = styled.div`
    padding-top: 46px;
`;

const TaskTabs = styled.div`
    position: absolute;
    right: 0;
    top: 56px;
    display: flex;
    flex-direction: column;
    gap: 1px;
`;

const TaskTab = styled.button`
    display: grid;
    place-items: center;
    width: 34px;
    height: 34px;
    border: 2px solid #8488a0;
    border-right: none;
    border-radius: 5px 0 0 5px;
    background: ${(p) => (p.$active ? "#f0f1f8" : "#b7bac9")};
`;

const BottomTabs = styled.div`
    display: flex;
    height: 22px;
    padding-left: 3px;
    font-family: ${tabFont};
    font-size: 17px;
    line-height: 18px;
    border-top: 2px solid #23252c;
    background: #e2e4ee;
`;

const NavButtons = styled.div`
    display: flex;
    gap: 1px;
    margin-right: 4px;
`;

const NavButton = styled.button`
    display: grid;
    place-items: center;
    width: 22px;
    border: 1px solid #9194a3;
    background: #b3b6c4;
`;

const BottomTab = styled.button`
    padding: 0 ${(p) => (p.$active ? "14px" : "22px 0 12px")};
    border: 2px solid #5d606c;
    border-top: none;
    border-left-width: ${(p) => (p.$active ? 2 : 0)}px;
    color: #2a2c34;
    font-weight: ${(p) => (p.$active ? 700 : 400)};
    background: ${(p) => (p.$active ? "#dfe1eb" : "#bfc2cf")};
`;

const StatusBar = styled.footer`
    display: flex;
    align-items: center;
    height: 30px;
    padding: 0 18px 0 3px;
    color: #24263a;
    background: linear-gradient(#c3c7d6, #d3d6e3);
    border-top: 2px solid #6e717e;
    border-bottom: 3px solid #7c8087;
`;

const StatusText = styled.div`
    flex: 1;
`;

const StatusCell = styled.div`
    width: ${(p) => p.$width}px;
`;

export default App;
